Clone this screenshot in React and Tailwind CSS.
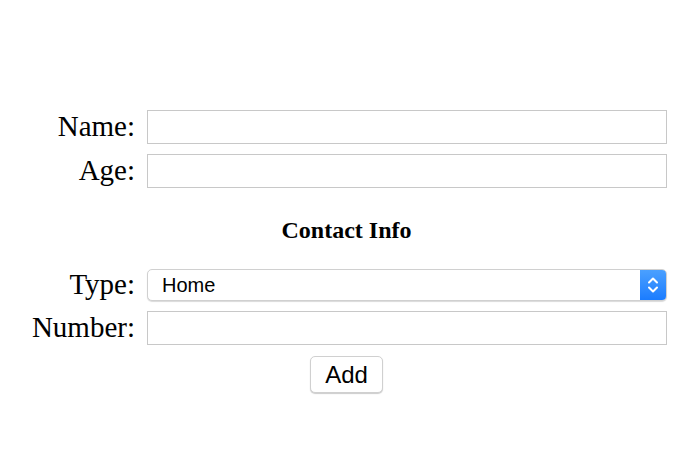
export default function App() {
  const serif = { fontFamily: '"Liberation Serif", "Times New Roman", serif' };
  return (
    <div className="w-[693px] h-[465px] bg-white" style={serif}>
      <div className="pt-[110px] flex flex-col items-center">
        <div className="grid grid-cols-[109px_520px] gap-x-3 gap-y-[10px] items-center">
          <label className="text-right text-[29px] leading-none text-black -mt-[2px]">Name:</label>
          <input className="h-[34px] border border-[#c8c8c8] bg-white outline-none" />
          <label className="text-right text-[29px] leading-none text-black -mt-[2px]">Age:</label>
          <input className="h-[34px] border border-[#c8c8c8] bg-white outline-none" />
        </div>
        <div className="mt-[30px] h-[24px] flex items-center font-bold text-[24px] text-black">Contact Info</div>
        <div className="mt-[27px] grid grid-cols-[109px_520px] gap-x-3 gap-y-[10px] items-center">
          <label className="text-right text-[29px] leading-none text-black -mt-[2px]">Type:</label>
          <div className="h-[32px] flex rounded-[5px] border border-[#d0d0d0] shadow-[0_1px_1px_rgba(0,0,0,0.15)] overflow-hidden bg-white">
            <div className="flex-1 flex items-center pl-[14px] text-[20px] text-black" style={{ fontFamily: '"Liberation Sans", Arial, sans-serif' }}>Home</div>
            <div className="w-[26px] flex items-center justify-center bg-gradient-to-b from-[#4aa0ff] to-[#1a7cff]">
              <svg width="12" height="20" viewBox="0 0 12 20" fill="none" stroke="white" strokeWidth="2" strokeLinecap="round" strokeLinejoin="round">
                <path d="M2 7.5 L6 3.5 L10 7.5" />
                <path d="M2 12.5 L6 16.5 L10 12.5" />
              </svg>
            </div>
          </div>
          <label className="text-right text-[29px] leading-none text-black -mt-[2px]">Number:</label>
          <input className="h-[34px] border border-[#c8c8c8] bg-white outline-none" />
        </div>
        <button className="mt-[11px] w-[73px] h-[37px] rounded-[5px] border border-[#d0d0d0] bg-white shadow-[0_1px_1px_rgba(0,0,0,0.2)] text-[24px] text-black" style={{ fontFamily: '"Liberation Sans", Arial, sans-serif' }}>Add</button>
      </div>
    </div>
  );
}
